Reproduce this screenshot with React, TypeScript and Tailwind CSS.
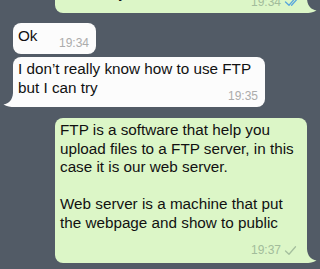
import React from "react";

type Ticks = "none" | "sent" | "read";

function Tail({ side, color }: { side: "left" | "right"; color: string }) {
    return (
        <svg
            width="12"
            height="14"
            viewBox="0 0 12 14"
            className={
                side === "right"
                    ? "absolute bottom-0 right-[-10px]"
                    : "absolute bottom-0 left-[-10px] -scale-x-100"
            }
        >
            <path d="M0 0 L2 0 C2.5 7 6 10.5 11.5 11.5 C8 13.5 5 14 0 14 Z" fill={color} />
        </svg>
    );
}

function Check({ kind }: { kind: Ticks }) {
    if (kind === "none") return null;
    const color = kind === "read" ? "#5aa6dc" : "#a5bf9e";
    return (
        <svg width="16" height="11" viewBox="0 0 16 11" fill="none" stroke={color} strokeWidth="1.3" strokeLinecap="round" strokeLinejoin="round">
            <path d="M1.5 6 L5 9.3 L11.5 1.8" />
            {kind === "read" && <path d="M7.6 9.3 L14.3 1.8" />}
        </svg>
    );
}

function Bubble({
    out,
    tail,
    width,
    text,
    time,
    ticks = "none",
    timeClass = "-mt-[8px]",
    bottomPad = "pb-[4px]",
    className = "",
}: {
    out?: boolean;
    tail?: boolean;
    width: string;
    text: string;
    time: string;
    ticks?: Ticks;
    timeClass?: string;
    bottomPad?: string;
    className?: string;
}) {
    const bg = out ? "#dcf6c7" : "#fcfcfc";
    return (
        <div
            className={`relative rounded-[8px] pl-[5px] pr-[7px] pt-[3.5px] ${bottomPad} ${width} ${className} ${
                out ? "bg-[#dcf6c7]" : "bg-[#fcfcfc]"
            } ${tail ? (out ? "rounded-br-none" : "rounded-bl-none") : ""}`}
        >
            <p className="whitespace-pre-line text-[15.25px] leading-[18.5px] text-[#111]">{text}</p>
            <div className={`flex h-[14px] items-center justify-end gap-[3px] ${timeClass}`}>
                <span className={`text-[12px] leading-[14px] ${out ? "text-[#a2bc9b]" : "text-[#ababab]"}`}>
                    {time}
                </span>
                <Check kind={ticks} />
            </div>
            {tail && <Tail side={out ? "right" : "left"} color={bg} />}
        </div>
    );
}

export default function App() {
    return (
        <div className="flex h-[269px] w-[320px] flex-col overflow-hidden bg-[#525b66] font-['Liberation_Sans',Arial,sans-serif]">
            {/* last outgoing message, mostly scrolled away */}
            <div className="-mt-[38px] flex justify-end pr-[13px]">
                <Bubble out tail width="w-[252px]" text={"Sure, I will set it up for you now\nIt is ready"} time="19:34" ticks="read" />
            </div>

            <div className="mt-[10.5px] flex pl-[13px]">
                <Bubble width="w-[83px]" text="Ok" time="19:34" timeClass="-mt-[9px]" />
            </div>
            <div className="mt-[2.5px] flex pl-[13px]">
                <Bubble tail width="w-[252px]" text={"I don’t really know how to use FTP\nbut I can try"} time="19:35" />
            </div>

            <div className="mt-[10.5px] flex justify-end pr-[13px]">
                <Bubble
                    out
                    tail
                    width="w-[252px]"
                    text={
                        "FTP is a software that help you\nupload files to a FTP server, in this\ncase it is our web server.\n\nWeb server is a machine that put\nthe webpage and show to public"
                    }
                    time="19:37"
                    ticks="sent"
                    timeClass="mt-[11px]"
                    bottomPad="pb-[5.5px]"
                />
            </div>
        </div>
    );
}
